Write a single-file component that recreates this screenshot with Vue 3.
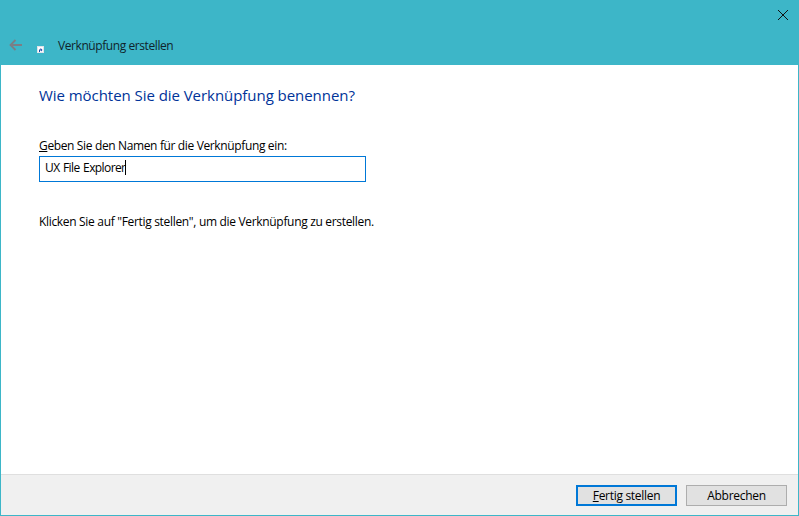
<script setup>
const name = 'UX File Explorer'
</script>

<template>
  <div class="window">
    <header class="head">
      <div class="close-row">
        <svg class="close" width="10" height="10" viewBox="0 0 10 10" shape-rendering="crispEdges" aria-label="Schließen">
          <path d="M0 0l10 10M10 0L0 10" stroke="#111" stroke-width="1.1" fill="none" />
        </svg>
      </div>
      <div class="title-row">
        <svg class="back" width="13" height="12" viewBox="0 0 13 12">
          <path d="M6.5 1L1.5 6l5 5M1.5 6H13" stroke="#7b7f86" stroke-width="1.8" fill="none" />
        </svg>
        <svg class="shortcut" width="7" height="7" viewBox="0 0 7 7">
          <rect width="7" height="7" fill="#dfe3ea" />
          <rect x="1" y="1" width="5" height="5" fill="#fff" />
          <path d="M2 6V3.5h1.5V2L5.5 4 4 5.5V4.5H3V6z" fill="#1f4aa8" />
        </svg>
        <span class="title">Verknüpfung erstellen</span>
      </div>
    </header>

    <main class="body">
      <h1 class="heading">Wie möchten Sie die Verknüpfung benennen?</h1>
      <label class="label"><span class="key">G</span>eben Sie den Namen für die Verknüpfung ein:</label>
      <div class="field">
        <span class="value">{{ name }}</span><span class="caret"></span>
      </div>
      <p class="hint">Klicken Sie auf "Fertig stellen", um die Verknüpfung zu erstellen.</p>
    </main>

    <footer class="foot">
      <button class="btn primary"><span class="key">F</span>ertig stellen</button>
      <button class="btn">Abbrechen</button>
    </footer>
  </div>
</template>

<style scoped>
.window {
  width: 799px;
  height: 516px;
  box-sizing: border-box;
  display: flex;
  flex-direction: column;
  background: #fff;
  border: 1px solid #3db6c8;
  border-top: 0;
  font-family: "Open Sans", "Noto Sans", sans-serif;
  font-size: 12px;
  color: #000;
}
.head {
  height: 65px;
  flex: none;
  background: #3db6c8;
  display: flex;
  flex-direction: column;
  margin: 0 -1px;
}
.close-row {
  display: flex;
  justify-content: flex-end;
  padding: 10px 11px 0 0;
  height: 33px;
  box-sizing: border-box;
}
.close { display: block; }
.title-row {
  display: flex;
  align-items: center;
  height: 26px;
}
.back { margin-left: 9px; margin-top: -2px; }
.shortcut { margin: 7px 0 0 15px; }
.title {
  margin-left: 14px;
  padding-bottom: 2px;
  color: #10242b;
  font-size: 12px;
  letter-spacing: -0.42px;
}
.body {
  flex: 1;
  padding: 0 0 0 38px;
  display: flex;
  flex-direction: column;
  align-items: flex-start;
}
.heading {
  margin: 20px 0 0;
  font-size: 15px;
  line-height: 20px;
  font-weight: 400;
  color: #003399;
  letter-spacing: -0.05px;
}
.label {
  margin-top: 33px;
  line-height: 16px;
  letter-spacing: -0.36px;
}
.key { text-decoration: underline; }
.field {
  margin-top: 2px;
  width: 327px;
  height: 26px;
  box-sizing: border-box;
  border: 1px solid #0078d7;
  padding: 0 0 3px 5px;
  display: flex;
  align-items: center;
}
.value { letter-spacing: -0.6px; word-spacing: 1px; }
.caret {
  width: 1px;
  height: 15px;
  background: #000;
}
.hint {
  margin: 32px 0 0;
  line-height: 16px;
  letter-spacing: -0.32px;
}
.foot {
  height: 41px;
  flex: none;
  box-sizing: border-box;
  background: #f0f0f0;
  border-top: 1px solid #dfdfdf;
  display: flex;
  justify-content: flex-end;
  align-items: flex-start;
  gap: 9px;
  padding: 10px 11px 0 0;
}
.btn {
  width: 101px;
  height: 21px;
  box-sizing: border-box;
  background: #e1e1e1;
  border: 1px solid #adadad;
  font: inherit;
  letter-spacing: -0.3px;
  color: #000;
  padding: 0;
}
.primary {
  border: 2px solid #0078d7;
}
</style>

<style>
html, body { margin: 0; background: #fff; overflow: hidden; }
</style>
